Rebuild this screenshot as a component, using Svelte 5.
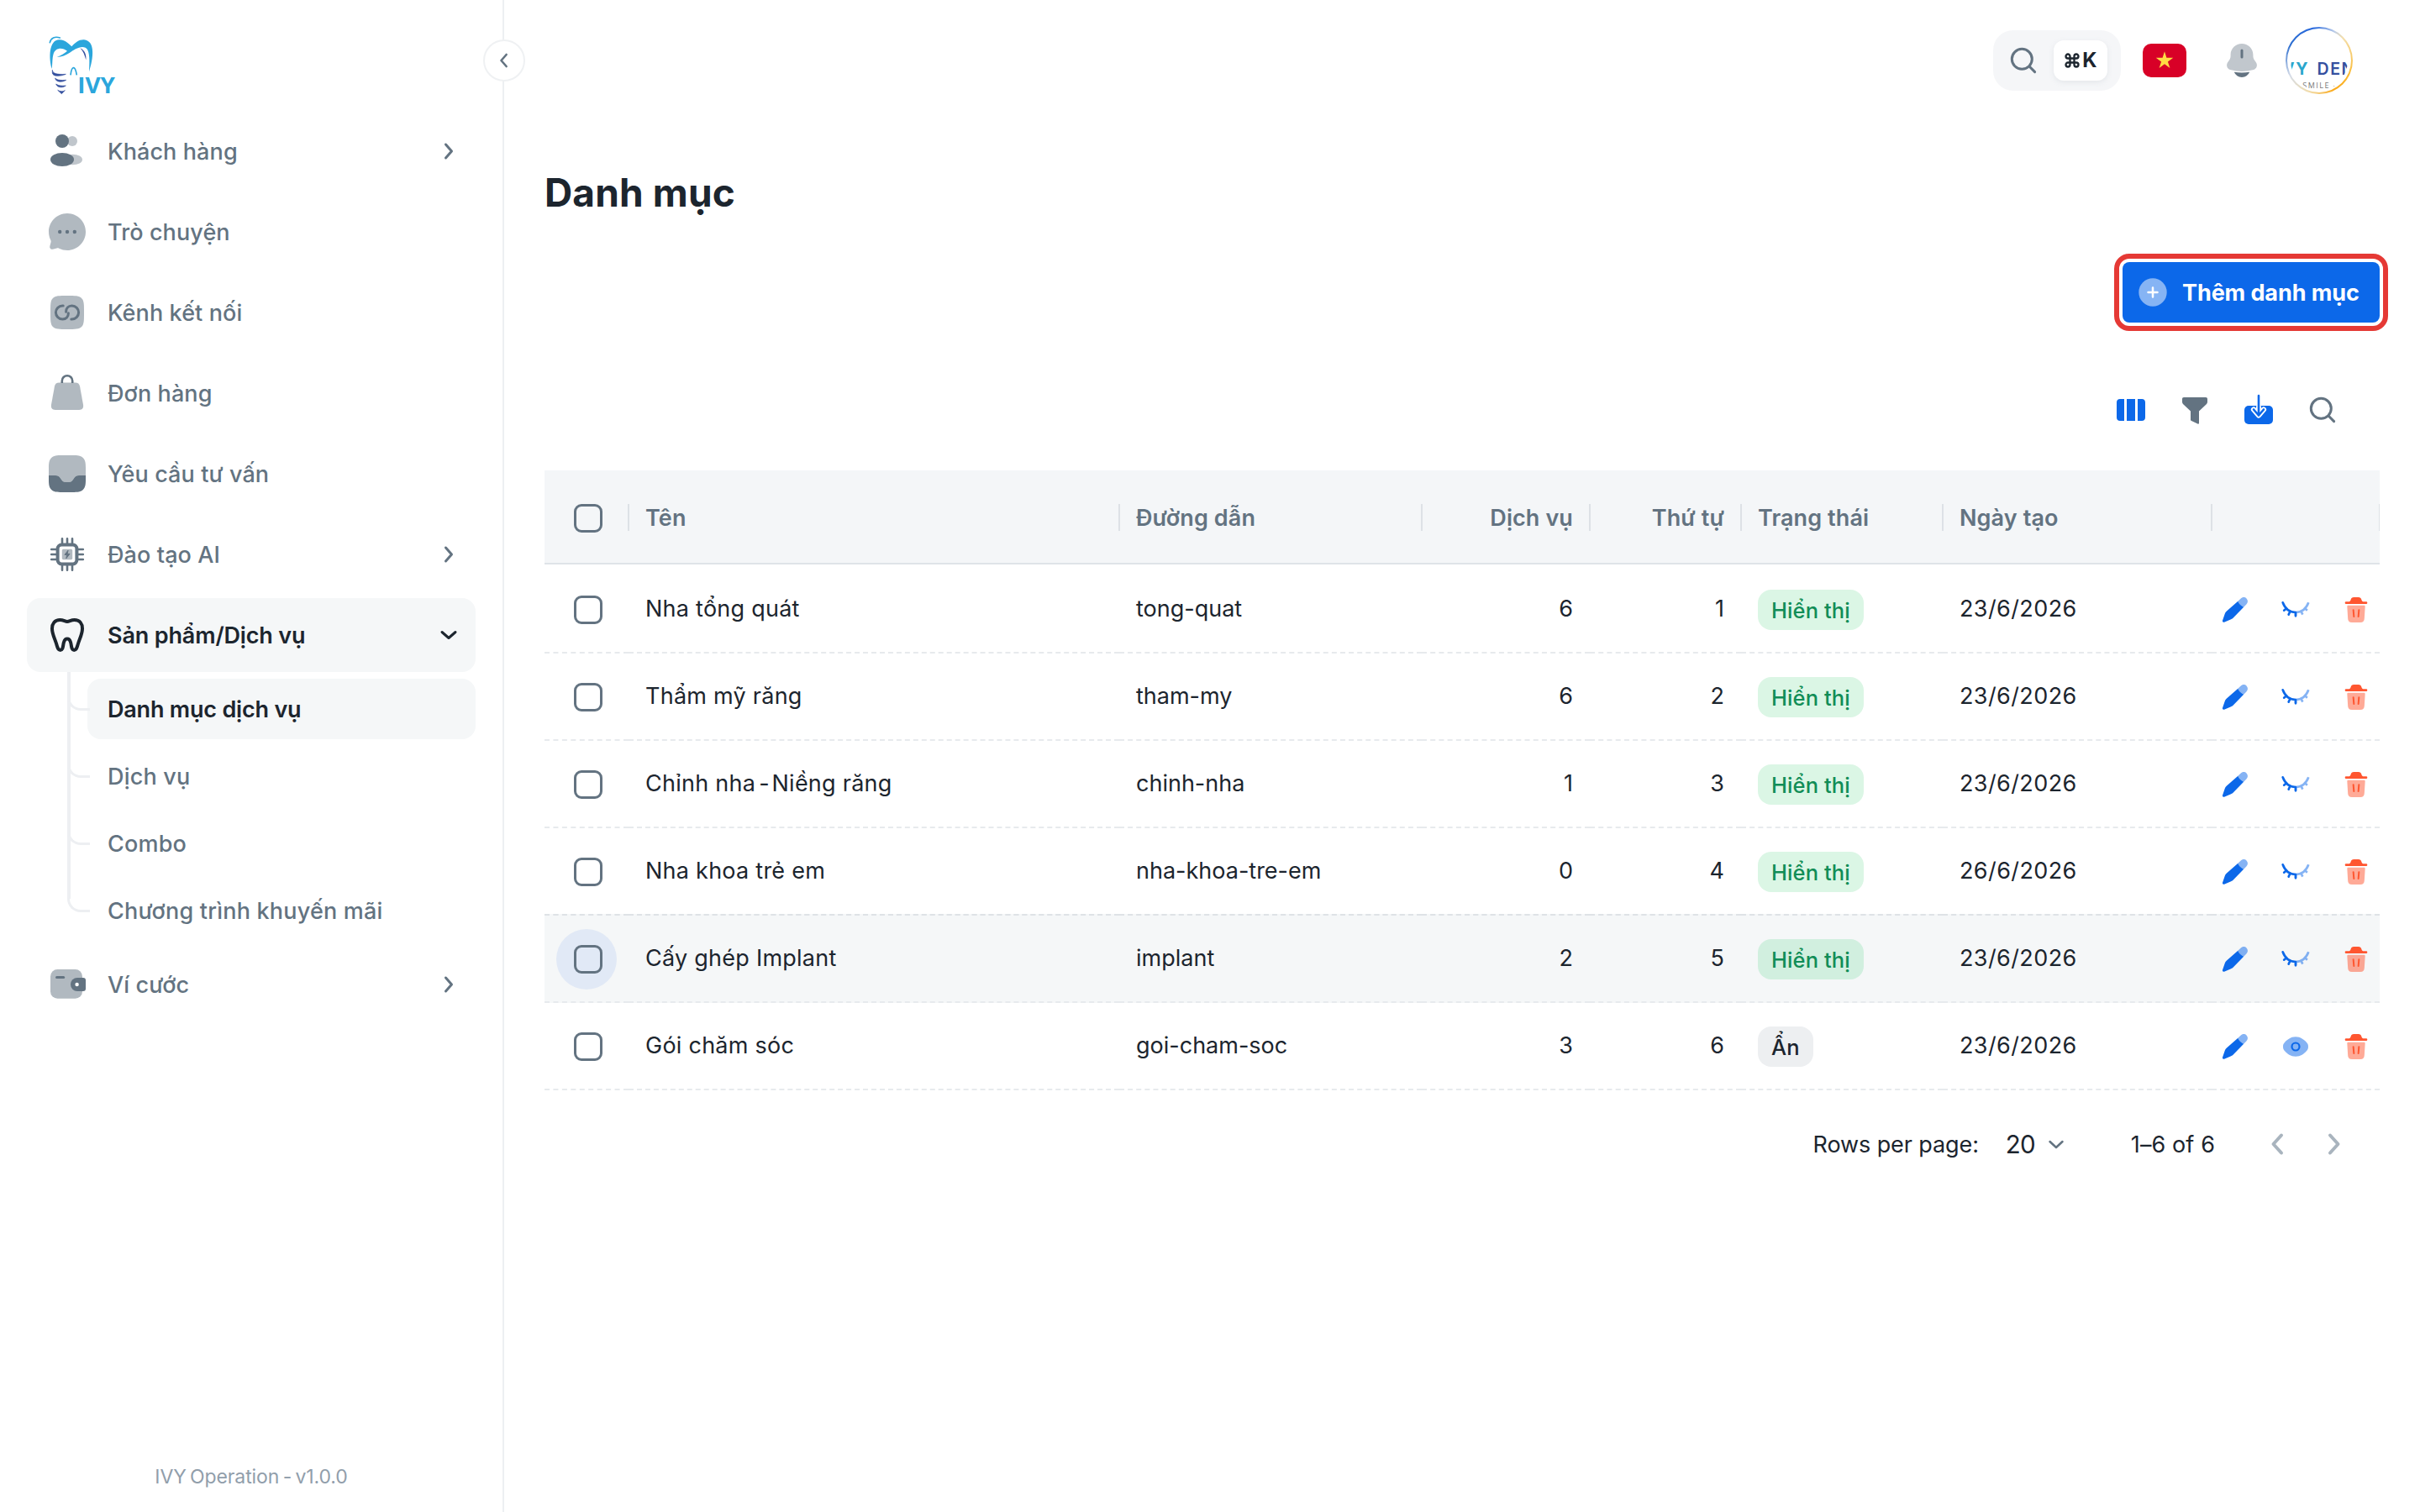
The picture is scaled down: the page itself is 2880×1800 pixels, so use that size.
<script lang="ts">
  type NavItem = { id: string; label: string; chevron?: boolean; active?: boolean };

  const before: NavItem[] = [
    { id: 'users', label: 'Khách hàng', chevron: true },
    { id: 'chat', label: 'Trò chuyện' },
    { id: 'link', label: 'Kênh kết nối' },
    { id: 'bag', label: 'Đơn hàng' },
    { id: 'inbox', label: 'Yêu cầu tư vấn' },
    { id: 'cpu', label: 'Đào tạo AI', chevron: true },
    { id: 'tooth', label: 'Sản phẩm/Dịch vụ', active: true }
  ];
  const after: NavItem[] = [{ id: 'wallet', label: 'Ví cước', chevron: true }];
  const children = ['Danh mục dịch vụ', 'Dịch vụ', 'Combo', 'Chương trình khuyến mãi'];

  const rows = [
    { name: 'Nha tổng quát', slug: 'tong-quat', services: 6, order: 1, visible: true, date: '23/6/2026' },
    { name: 'Thẩm mỹ răng', slug: 'tham-my', services: 6, order: 2, visible: true, date: '23/6/2026' },
    { name: 'Chỉnh nha - Niềng răng', slug: 'chinh-nha', services: 1, order: 3, visible: true, date: '23/6/2026' },
    { name: 'Nha khoa trẻ em', slug: 'nha-khoa-tre-em', services: 0, order: 4, visible: true, date: '26/6/2026' },
    { name: 'Cấy ghép Implant', slug: 'implant', services: 2, order: 5, visible: true, date: '23/6/2026', hover: true },
    { name: 'Gói chăm sóc', slug: 'goi-cham-soc', services: 3, order: 6, visible: false, date: '23/6/2026' }
  ];
</script>

{#snippet navIcon(id: string)}
  <svg class="nav-icon" viewBox="0 0 24 24" fill="currentColor">
    {#if id === 'users'}
      <g opacity=".4"><circle cx="15" cy="6" r="3" /><ellipse cx="15.2" cy="17" rx="5.8" ry="3.1" /></g>
      <circle cx="9" cy="6" r="4" /><ellipse cx="9" cy="17" rx="7" ry="4" />
    {:else if id === 'chat'}
      <path opacity=".5" d="M12 23c6.1 0 11-4.9 11-11S18.100 1 12 1 1 5.900 1 12c0 1.760.41 3.420 1.140 4.900.2.390.26.850.15 1.280l-.65 2.440a1.430 1.430 0 0 0 1.750 1.750l2.440-.65c.43-.12.88-.06 1.280.14A10.960 10.960 0 0 0 12 23Z" />
      <circle cx="7.6" cy="12" r="1.1" /><circle cx="12" cy="12" r="1.1" /><circle cx="16.4" cy="12" r="1.1" />
    {:else if id === 'link'}
      <path opacity=".5" d="M2 12c0-4.700 0-7.070 1.460-8.540C4.930 2 7.290 2 12 2s7.070 0 8.540 1.460C22 4.930 22 7.290 22 12s0 7.070-1.460 8.540C19.070 22 16.710 22 12 22s-7.070 0-8.540-1.460C2 19.070 2 16.710 2 12Z" />
      <g fill="none" stroke="currentColor" stroke-width="1.500" stroke-linecap="round">
        <path d="M9.600 8H9.200a4 4 0 0 0 0 8c2.200 0 3.500-1.600 3.500-3.600" />
        <path d="M14.400 16h.4a4 4 0 0 0 0-8c-2.200 0-3.500 1.600-3.500 3.600" />
      </g>
    {:else if id === 'bag'}
      <path opacity=".5" d="M7.300 5.700h9.400c1.700 0 2.500.7 2.800 2.200l2 11c.3 1.900-.5 3.100-2.400 3.100H4.900c-1.900 0-2.700-1.200-2.400-3.100l2-11c.3-1.500 1.100-2.200 2.800-2.200Z" />
      <path d="M8.900 6V4.700a3.100 3.100 0 0 1 6.200 0V6" fill="none" stroke="currentColor" stroke-width="1.300" />
    {:else if id === 'inbox'}
      <path opacity=".5" d="M1 13V8.500C1 5.500 1.300 3.800 2.500 2.600 3.800 1.200 5.800 1 9 1h6c3.200 0 5.200.2 6.500 1.600C22.700 3.800 23 5.500 23 8.500V13h-4c-1.700 0-2.300.6-3.100 1.900-.9 1.400-1.600 2.100-3.200 2.100h-1.400c-1.600 0-2.300-.7-3.200-2.100C7.300 13.600 6.700 13 5 13Z" />
      <path d="M1 13h4c1.700 0 2.300.6 3.100 1.900.9 1.400 1.600 2.100 3.200 2.100h1.400c1.600 0 2.300-.7 3.200-2.100.8-1.300 1.400-1.900 3.100-1.900h4v2.500c0 3-.3 4.700-1.500 5.900C20.200 22.800 18.200 23 15 23H9c-3.200 0-5.200-.2-6.500-1.600C1.300 20.200 1 18.500 1 15.500Z" />
    {:else if id === 'cpu'}
      <g fill="none" stroke="currentColor">
        <path stroke-width="1.300" stroke-linecap="round" d="M9 2.600v3M12 2.600v3M15 2.600v3M9 18.400v3M12 18.400v3M15 18.400v3M2.600 9h3M2.600 12h3M2.600 15h3M18.400 9h3M18.400 12h3M18.400 15h3" />
        <rect x="6.300" y="6.300" width="11.400" height="11.400" rx="2.400" stroke-width="2" />
      </g>
      <rect opacity=".5" x="8.900" y="8.900" width="6.200" height="6.200" rx=".8" />
      <path d="M12.500 9.600 10.500 12.200h1.300l-.4 2.200 2.100-2.700h-1.400Z" stroke="currentColor" stroke-width=".5" stroke-linejoin="round" />
    {:else if id === 'tooth'}
      <path fill="none" stroke="currentColor" stroke-width="2" stroke-linejoin="round" d="M12 4c1.300 0 2.200-1 4.300-1C19.500 3 21 5.300 21 8.100c0 3.300-1.600 6-2.500 9-.7 2.300-1 3.900-2.400 3.900-1.500 0-1.500-1.900-1.900-4-.4-1.900-.9-2.700-2.200-2.700s-1.800.8-2.200 2.700c-.4 2.100-.4 4-1.900 4-1.400 0-1.700-1.600-2.400-3.900-.9-3-2.500-5.700-2.500-9C3 5.300 4.500 3 7.700 3 9.800 3 10.700 4 12 4Z" />
    {:else}
      <rect opacity=".5" x="2" y="3" width="19" height="17.400" rx="4.200" />
      <rect x="5" y="7" width="5.600" height="1.500" rx=".75" />
      <path d="M18 8h3.500c1 0 1.500.5 1.500 1.500v5c0 1-.5 1.500-1.500 1.500H18a4 4 0 0 1 0-8Z" />
      <circle cx="17.800" cy="12" r="1.100" fill="#fff" />
    {/if}
  </svg>
{/snippet}

{#snippet navItem(item: NavItem)}
  <a class="nav-item" class:active={item.active}>
    {@render navIcon(item.id)}
    <span class="nav-label">{item.label}</span>
    {#if item.chevron}
      <svg class="chev" viewBox="0 0 32 32"><path d="m12.500 8 7 8-7 8" /></svg>
    {:else if item.active}
      <svg class="chev" viewBox="0 0 32 32"><path d="m8 12.500 8 7 8-7" /></svg>
    {/if}
  </a>
{/snippet}

{#snippet magnifier()}
  <g fill="none" stroke="currentColor" stroke-width="3" stroke-linecap="round">
    <circle cx="18.300" cy="18.300" r="12" /><path d="m27.300 27.300 6.300 6.300" />
  </g>
{/snippet}

<div class="app">
  <aside class="sidebar">
    <div class="brand">
      <svg viewBox="0 0 360 300" class="logo">
        <path fill="#2ba6dc" d="M65 156C54 118 54 52 92 52c20 0 30 12 44 24 14-15 26-25 44-24 42 4 33 68 18 114 2-34 4-78-13-86-18-8-42 8-56 18-14 9-28 15-46 16 14-6 28-14 37-22-18-14-42-12-49 10-5 18-3 32-6 54Z" />
        <path fill="none" stroke="#2ba6dc" stroke-width="5" stroke-linecap="round" d="M58 62c3-17 19-23 36-17" />
        <path fill="none" stroke="#2ba6dc" stroke-width="5" d="M132 178c4-34 16-36 22 0" />
        <path fill="#35509f" d="M166 82c17 8 23 24 21 42-5-17-9-30-21-42Z" />
        <path fill="#35509f" stroke="#35509f" stroke-width="2" d="M67 160c0 12 15 17 48 15-21 9-48 8-48-5v-10ZM77 189c7 8 21 8 39 7-14 9-37 8-39-7ZM80 210c9 7 21 7 35 6-13 9-31 7-35-6ZM86 232c9 6 20 5 26 1l-12 12Z" />
        <text x="157" y="243" class="logo-text" textLength="134" lengthAdjust="spacingAndGlyphs">IVY</text>
      </svg>
    </div>
    <nav class="nav">
      {#each before as item}{@render navItem(item)}{/each}
      <div class="sub">
        {#each children as label, i}
          <div class="sub-row">
            <span class="branch" class:last={i === 3}></span>
            <a class="sub-item" class:active={i === 0}>{label}</a>
          </div>
        {/each}
      </div>
      {#each after as item}{@render navItem(item)}{/each}
    </nav>
    <footer class="version">IVY Operation - v1.0.0</footer>
    <button class="collapse" aria-label="Thu gọn"><svg class="chev" viewBox="0 0 32 32"><path d="m19 8-7 8 7 8" /></svg></button>
  </aside>

  <main class="main">
    <header class="topbar">
      <div class="search-pill">
        <svg class="i40" viewBox="0 0 40 40">{@render magnifier()}</svg>
        <kbd><svg class="cmd" viewBox="0 0 24 24"><path d="M9 9V6a3 3 0 1 0-3 3h12a3 3 0 1 0-3-3v12a3 3 0 1 0 3-3H6a3 3 0 1 0 3 3Z" /></svg>K</kbd>
      </div>
      <svg class="flag" viewBox="0 0 52 40"><rect width="52" height="40" rx="10" fill="#d80027" /><path fill="#ffda44" d="m26 9.300 2.400 7.500h7.900l-6.400 4.600 2.500 7.500-6.400-4.600-6.400 4.600 2.500-7.500-6.400-4.600h7.900Z" /></svg>
      <svg class="bell" viewBox="0 0 24 24" fill="#637381">
        <path opacity=".4" d="M18.700 8.500v.7c0 .85.24 1.680.7 2.380l1.100 1.720c1 1.570.3 3.700-1.500 4.200a25.600 25.600 0 0 1-14 0c-1.800-.5-2.500-2.630-1.500-4.200l1.100-1.720c.46-.7.7-1.530.7-2.380v-.7C5.300 4.900 8.300 2 12 2s6.700 2.900 6.700 6.500Z" />
        <path d="M7.400 18.900a5 5 0 0 0 9.200 0c-3.100.5-6.100.5-9.200 0Z" />
        <rect x="11.250" y="5.200" width="1.500" height="5.500" rx=".75" />
      </svg>
      <div class="avatar"><div class="photo"><div class="w1"><i>VY</i> DEN</div><div class="w2">- SMILE -</div></div></div>
    </header>

    <h1>Danh mục</h1>

    <div class="actions">
      <div class="highlight">
        <button class="add">
          <svg viewBox="0 0 34 34"><circle cx="17" cy="17" r="16.700" fill="#fff" opacity=".5" /><path d="M17 11.500v11M11.500 17h11" stroke="#fff" stroke-width="2.500" stroke-linecap="round" /></svg>
          <span>Thêm danh mục</span>
        </button>
      </div>
    </div>

    <div class="toolbar">
      <svg class="i40 blue" viewBox="0 0 40 40" fill="currentColor"><path d="M7 7h5v26H7c-2.500 0-4-1.500-4-4V11c0-2.500 1.500-4 4-4ZM15 7h10v26H15ZM28 7h5c2.500 0 4 1.500 4 4v18c0 2.500-1.500 4-4 4h-5Z" /></svg>
      <svg class="i40" viewBox="0 0 40 40" fill="currentColor"><path d="M7 5h26c1.300 0 2 .7 2 2v3.500c0 1-.3 1.700-1 2.400L25 21.500v14c0 1.100-.7 1.400-1.600 1L16 33c-.7-.4-1-.8-1-1.600v-9.900L6 12.900c-.7-.7-1-1.400-1-2.400V7c0-1.300.7-2 2-2Z" /></svg>
      <svg class="i40 blue" viewBox="0 0 40 40"><rect x="3" y="15" width="34" height="22" rx="5" fill="currentColor" /><g fill="none" stroke-linecap="round" stroke-linejoin="round"><path d="m14 19.500 6 7 6-7M20 17v6" stroke="#fff" stroke-width="6.200" /><path d="M20 3v23m-6-6.500 6 7 6-7" stroke="currentColor" stroke-width="2.600" /></g></svg>
      <svg class="i40" viewBox="0 0 40 40">{@render magnifier()}</svg>
    </div>

    <section class="table">
      <div class="grid head">
        <div class="cell check"><span class="box"></span></div>
        <div class="cell">Tên</div>
        <div class="cell">Đường dẫn</div>
        <div class="cell num">Dịch vụ</div>
        <div class="cell num">Thứ tự</div>
        <div class="cell">Trạng thái</div>
        <div class="cell">Ngày tạo</div>
        <div class="cell"></div>
      </div>
      {#each rows as r}
        <div class="grid row" class:hover={r.hover}>
          <div class="cell check"><span class="halo"><span class="box"></span></span></div>
          <div class="cell name">
            {#if r.name.includes(' - ')}
              {r.name.split(' - ')[0]}<span class="dash">&nbsp;-&nbsp;</span>{r.name.split(' - ')[1]}
            {:else}
              {r.name}
            {/if}
          </div>
          <div class="cell">{r.slug}</div>
          <div class="cell num">{r.services}</div>
          <div class="cell num">{r.order}</div>
          <div class="cell status"><span class="chip" class:off={!r.visible}>{r.visible ? 'Hiển thị' : 'Ẩn'}</span></div>
          <div class="cell date">{r.date}</div>
          <div class="cell tools">
            <svg class="i40 blue" viewBox="0 0 24 24" fill="currentColor">
              <path opacity=".5" d="m14 5.900 1.900-1.900c1.300-1.300 3.100-1.300 4.200-.1 1.200 1.200 1.200 3-.1 4.200l-1.900 1.900c-2-.9-3.300-2.100-4.100-4.100Z" />
              <path d="M14 5.900c.8 2 2.100 3.200 4.100 4.100l-7.300 7.500c-.6.6-1 .9-1.700 1.200l-4.900 2.100c-.8.300-1.400-.3-1.200-1.100l1.700-5c.3-.7.500-1.100 1.100-1.700Z" />
            </svg>
            {#if r.visible}
              <svg class="i40 blue" viewBox="0 0 24 24" fill="none" stroke="currentColor" stroke-width="1.600" stroke-linecap="round">
                <path opacity=".5" stroke-linecap="butt" d="M12 13.800c4 0 7.500-2.500 9.200-7M12 13v3.400M16 13.200l1 2.200M18.700 11l1.600 1.400" />
                <path d="M2.800 6.800c1.700 4.500 5.200 7 9.200 7M12 14v2.400M8 13.200l-1 2.200M5.300 11l-1.600 1.400" />
              </svg>
            {:else}
              <svg class="i40 blue" viewBox="0 0 24 24" fill="currentColor">
                <path opacity=".5" d="M3 12c0 1.600.4 2.200 1.300 3.200C5.900 17 8.500 19.100 12 19.100s6.100-2.100 7.700-3.900c.9-1 1.300-1.600 1.300-3.200s-.4-2.200-1.300-3.200C18.100 7 15.500 4.900 12 4.900S5.900 7 4.300 8.800C3.400 9.800 3 10.400 3 12Z" />
                <circle cx="12" cy="12" r="2.700" fill="none" stroke="currentColor" stroke-width="1.300" />
              </svg>
            {/if}
            <svg class="i40 red" viewBox="0 0 24 24" fill="currentColor">
              <path d="M4.800 6.200h2.300c.7-.3.900-.8 1.100-1.500.4-1.200.9-1.700 2.200-1.700h3.200c1.300 0 1.800.5 2.200 1.700.2.700.4 1.200 1.100 1.500h2.300a.8.8 0 0 1 0 1.600H4.800a.8.8 0 0 1 0-1.600Z" />
              <path opacity=".5" d="M5.600 9.700c0-.5.300-.8.800-.8h11.200c.5 0 .8.300.8.800l-.5 8.300c-.1 2-.9 3-2.900 3H9c-2 0-2.800-1-2.900-3Z" />
              <path d="m10 12.100.4 4.700M14 12.100l-.4 4.700" stroke="currentColor" stroke-width="1.200" stroke-linecap="round" />
            </svg>
          </div>
        </div>
      {/each}
    </section>

    <div class="pager">
      <span class="label">Rows per page:</span>
      <span class="size">20</span>
      <svg class="small" viewBox="0 0 24 24"><path d="m4.500 9 7.500 7 7.500-7" /></svg>
      <span class="range">1–6 of 6</span>
      <svg class="arrow" viewBox="0 0 40 40"><path d="m25 9.500-9.500 10.500L25 30.500" /></svg>
      <svg class="arrow" viewBox="0 0 40 40"><path d="m15 9.500 9.500 10.500L15 30.500" /></svg>
    </div>
  </main>
</div>

<style>
  :global(body) { background: #fff; }
  * { box-sizing: border-box; }
  .app { display: flex; width: 2880px; height: 1800px; overflow: hidden; font: 400 27px/44px Inter, sans-serif; color: #1c252e; }
  svg { display: block; flex: none; }
  button { font: inherit; border: 0; padding: 0; }

  .sidebar { position: relative; width: 600px; flex: none; display: flex; flex-direction: column; border-right: 2px solid #edeff2; }
  .brand { height: 136px; padding: 30px 0 0 40px; }
  .logo { width: 120px; height: 100px; }
  .logo-text { font: 700 78px "Open Sans", sans-serif; fill: #2ba6dc; }
  .nav { display: flex; flex-direction: column; gap: 8px; padding: 0 32px; }
  .nav-item { display: flex; align-items: center; gap: 24px; height: 88px; padding: 0 16px 0 24px; border-radius: 16px; color: #637381; font-weight: 500; }
  .nav-item.active { background: #f5f7f8; color: #1c252e; }
  .nav-item.active .nav-label { font-weight: 600; letter-spacing: -0.15px; }
  .nav-icon { width: 48px; height: 48px; }
  .nav-label { flex: 1; padding-top: 2px; letter-spacing: 0.1px; }
  .chev { width: 32px; height: 32px; fill: none; stroke: currentColor; stroke-width: 3; stroke-linecap: round; stroke-linejoin: round; }
  .sub { display: flex; flex-direction: column; gap: 8px; }
  .sub-row { display: flex; height: 72px; padding-left: 48px; }
  .branch { position: relative; width: 24px; flex: none; height: 38px; }
  .branch::before { content: ''; position: absolute; left: 0; top: -8px; width: 4px; height: 88px; background: #edeff2; }
  .branch.last::before { height: 30px; }
  .branch::after { content: ''; position: absolute; left: 0; bottom: 0; width: 24px; height: 20px; border-left: 3px solid #edeff2; border-bottom: 3px solid #edeff2; border-bottom-left-radius: 16px; }
  .sub-item { flex: 1; display: flex; align-items: center; padding: 2px 0 0 24px; border-radius: 16px; color: #637381; font-weight: 500; letter-spacing: 0.2px; }
  .sub-item.active { background: #f5f7f8; color: #1c252e; font-weight: 600; letter-spacing: -0.2px; }
  .version { margin-top: auto; height: 64px; text-align: center; font-size: 23px; line-height: 44px; letter-spacing: -0.1px; word-spacing: -2px; color: #919eab; }
  .collapse { position: absolute; left: 575px; top: 47px; width: 50px; height: 50px; border: 2px solid #eff1f3; border-radius: 50%; background: #fff; color: #637381; display: grid; place-items: center; }
  .collapse .chev { width: 28px; height: 28px; }

  .main { flex: 1; display: flex; flex-direction: column; padding: 0 48px; }
  .topbar { display: flex; align-items: center; justify-content: flex-end; height: 144px; padding-right: 32px; }
  .search-pill { display: flex; align-items: center; justify-content: space-between; width: 152px; height: 72px; padding: 0 16px; border-radius: 24px; background: #f5f6f8; color: #637381; }
  kbd { display: flex; align-items: center; justify-content: center; gap: 2px; width: 64px; height: 48px; border-radius: 12px; background: #fff; color: #1c252e; font: 700 24px/48px Inter, sans-serif; box-shadow: 0 2px 6px rgba(145, 158, 171, 0.16); }
  .cmd { width: 20px; height: 20px; fill: none; stroke: currentColor; stroke-width: 2.800; }
  .flag { width: 52px; height: 40px; margin-left: 26px; }
  .bell { width: 48px; height: 48px; margin-left: 42px; }
  .avatar { width: 80px; height: 80px; margin-left: 28px; padding: 2px; border-radius: 50%; background: conic-gradient(from 45deg, #f3dfae, #fbb931 20%, #fba919 30%, #f2dca8 42%, #d5dce8 55%, #2e6fd0 70%, #2768dd 85%, #b9cbea 95%, #f3dfae); }
  .photo { height: 100%; border-radius: 50%; background: #fff; overflow: hidden; white-space: nowrap; border: solid #fff; border-width: 2px 4px; }
  .w1 { margin: 36px 0 0 -10px; font: 600 19.500px/20px Inter, sans-serif; letter-spacing: 1.600px; color: #35509f; word-spacing: 3px; }
  .w1 i { font-style: normal; font-weight: 700; color: #2ba6cc; }
  .w2 { margin: 5px 0 0 6px; font: 400 9px/10px "Open Sans", sans-serif; letter-spacing: 1.500px; color: #777; }

  h1 { margin: 49px 0 0; font-size: 46px; line-height: 72px; font-weight: 700; letter-spacing: 0.15px; }
  .actions { display: flex; justify-content: flex-end; margin: 37px -10px 0 0; }
  .highlight { padding: 4px; border: 6px solid #e53935; border-radius: 18px; }
  .add { display: flex; align-items: center; gap: 19px; width: 306px; height: 72px; padding-left: 19px; border-radius: 8px; background: #0c68e9; color: #fff; font-weight: 700; letter-spacing: -0.1px; }
  .add svg { width: 34px; height: 34px; }
  .add span { padding-top: 1px; margin-left: -1px; }
  .toolbar { display: flex; justify-content: flex-end; gap: 36px; height: 166px; padding: 74px 48px 0 0; color: #637381; }
  .i40 { width: 40px; height: 40px; }
  .blue { color: #0c68e9; }
  .red { color: #ff5630; }

  .grid { display: grid; grid-template-columns: 100px 584px 360px 200px 180px 240px 320px 200px; }
  .table { overflow: hidden; }
  .cell { display: flex; align-items: center; padding: 0 20px; white-space: nowrap; }
  .num { justify-content: flex-end; }
  .head { height: 112px; background: #f4f6f8; color: #637381; font-weight: 600; border-bottom: 2px solid #dfe3e8; letter-spacing: 0.1px; }
  .head .cell { position: relative; padding-top: 4px; }
  .head .check { padding-top: 3px; }
  .head .cell::after { content: ''; position: absolute; right: -1px; top: 40px; width: 2px; height: 32px; background: #dde1e6; }
  .row { height: 104px; }
  .head + .row { height: 106px; }
  .head + .row .cell { padding-top: 2px; }
  .row .cell { border-bottom: 2px dashed #e7eaed; }
  .row.hover { height: 106px; margin-top: -2px; background: #f5f7f8; }
  .row.hover .cell { border-top: 2px dashed #dee2e6; }
  .check { justify-content: center; }
  .row .check { padding-top: 2px; }
  .head + .row .check { padding-top: 3px; }
  .name { letter-spacing: 0.25px; }
  .dash { letter-spacing: -3.400px; margin-right: 2px; }
  .date { letter-spacing: 0.4px; }
  .halo { display: grid; place-items: center; width: 72px; height: 72px; border-radius: 50%; flex: none; }
  .hover .halo { background: #e1e9f6; }
  .box { width: 34px; height: 34px; border: 3px solid #637381; border-radius: 9px; margin-left: 3px; flex: none; }
  .row .status, .row .tools { padding-top: 1px; }
  .head + .row .status, .head + .row .tools { padding-top: 3px; }
  .chip { height: 48px; padding: 0 16px; border-radius: 16px; background: #dbf6e5; color: #118d57; font-size: 25.500px; font-weight: 500; letter-spacing: 0.1px; line-height: 50px; }
  .chip.off { background: #edeff1; color: #1c252e; }
  .hover .chip { background: #d1efdf; }
  .tools { gap: 32px; padding-left: 8px; }

  .pager { display: flex; align-items: center; height: 128px; padding-right: 34px; justify-content: flex-end; }
  .label { letter-spacing: -0.1px; margin-right: 32px; padding-top: 1px; }
  .size { font-size: 29.500px; letter-spacing: -0.8px; margin-right: 13px; }
  .small { width: 24px; height: 24px; fill: none; stroke: #637381; stroke-width: 2.500; stroke-linecap: round; stroke-linejoin: round; margin-right: 77px; }
  .arrow { width: 40px; height: 40px; margin-left: 28px; fill: none; stroke: #a9b4be; stroke-width: 4; stroke-linecap: round; stroke-linejoin: round; }
  .range { letter-spacing: 0.1px; margin-right: 26px; padding-top: 1px; }
</style>
